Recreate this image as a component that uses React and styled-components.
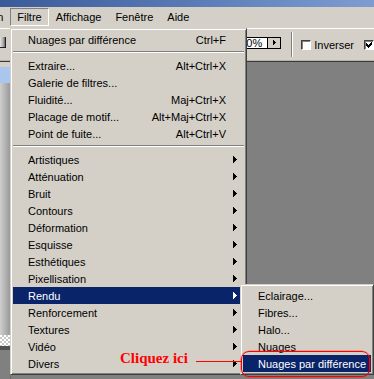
import React from 'react';
import styled, { createGlobalStyle } from 'styled-components';

const Global = createGlobalStyle`
  html, body { margin: 0; padding: 0; background: #808080; }
  body { font-family: "Liberation Sans", Arial, sans-serif; font-size: 11px; color: #000; }
  * { box-sizing: border-box; }
`;

const Screen = styled.div`
  position: relative;
  width: 374px;
  height: 379px;
  overflow: hidden;
  display: flex;
  flex-direction: column;
  background: #d4d0c8;
`;

const TitleBar = styled.div`
  flex: none;
  height: 7px;
  background: linear-gradient(90deg, #3b5a99 0%, #5a7ab6 50%, #7d9dd2 100%);
`;

const MenuBar = styled.div`
  flex: none;
  height: 21px;
  overflow: hidden;
  padding-top: 1px;
  background: #d4d0c8;
`;

const MenuRow = styled.div`
  display: flex;
  margin-left: -49px;
`;

const MenuBarItem = styled.div`
  height: 18px;
  line-height: 16px;
  padding: 0 6px;
  white-space: nowrap;
  border: 1px solid transparent;
  border-color: ${p => (p.$open ? '#808080 #ffffff #ffffff #808080' : 'transparent')};
`;

const OptionsBar = styled.div`
  flex: none;
  height: 33px;
  border-top: 1px solid #ffffff;
  border-bottom: 1px solid #b8b4ac;
  display: flex;
  align-items: center;
`;

const GradButton = styled.div`
  width: 8px;
  height: 11px;
  margin-top: -5px;
  background: linear-gradient(90deg, #e4e4e4 0%, #b0b0b0 60%, #6a6a6a 100%);
  border-right: 1px solid #202020;
  border-bottom: 1px solid #202020;
`;

const ZoomGroup = styled.div`
  display: flex;
  margin-left: 217px;
  margin-top: -4px;
  height: 12px;
  border: 1px solid #000;
`;

const ZoomField = styled.div`
  width: 43px;
  background: #fff;
  text-align: right;
  padding-right: 5px;
  line-height: 10px;
`;

const ZoomArrow = styled.div`
  width: 13px;
  border-left: 1px solid #000;
  background: #d4d0c8;
  display: flex;
  align-items: center;
  justify-content: center;
`;

const VSep = styled.div`
  width: 2px;
  height: 25px;
  margin-left: 10px;
  border-left: 1px solid #808080;
  border-right: 1px solid #ffffff;
`;

const CheckBox = styled.div`
  width: 10px;
  height: 10px;
  margin-left: ${p => p.$ml}px;
  flex: none;
  background: #fff;
  border: 1px solid;
  border-color: #404040 #ffffff #ffffff #404040;
  box-shadow: inset 1px 1px #808080;
  display: flex;
  align-items: center;
  justify-content: center;
`;

const OptLabel = styled.span`
  margin-left: 3px;
  white-space: nowrap;
`;

const Workspace = styled.div`
  flex: 1;
  display: flex;
  border-top: 1px solid #3a3a3a;
  background: #808080;
`;

const ToolsColumn = styled.div`
  width: 11px;
  flex: none;
  display: flex;
  flex-direction: column;
  border-right: 1px solid #6a6a6a;
`;

const ToolsTop = styled.div`
  height: 5px;
  background: #d4d0c8;
`;

const ToolsSelected = styled.div`
  height: 16px;
  background: #a9c6ee;
`;

const ToolsBody = styled.div`
  height: 252px;
  background: linear-gradient(90deg, #cfcfcf 0%, #b4b4b4 50%, #9a9a9a 100%);
`;

const ToolsChecker = styled.div`
  height: 11px;
  background-color: #ffffff;
  background-image:
    linear-gradient(45deg, #c8c8c8 25%, transparent 25%, transparent 75%, #c8c8c8 75%),
    linear-gradient(45deg, #c8c8c8 25%, transparent 25%, transparent 75%, #c8c8c8 75%);
  background-size: 4px 4px;
  background-position: 0 0, 2px 2px;
`;

const ToolsDark = styled.div`
  height: 4px;
  background: #505050;
`;

const Canvas = styled.div`
  flex: 1;
  background: #808080;
`;

/* ---------- popup menus ---------- */

const Popup = styled.div`
  position: absolute;
  left: ${p => p.$x}px;
  top: ${p => p.$y}px;
  width: ${p => p.$w}px;
  background: #d4d0c8;
  border: 1px solid;
  border-color: #d4d0c8 #404040 #404040 #d4d0c8;
  box-shadow: inset 1px 1px #ffffff, inset -1px -1px #808080;
  padding: 2px;
`;

const Item = styled.div`
  display: flex;
  align-items: center;
  height: 17px;
  padding-left: 15px;
  white-space: nowrap;
  background: ${p => (p.$hot ? '#0a246a' : 'transparent')};
  color: ${p => (p.$hot ? '#ffffff' : '#000000')};
`;

const ItemLabel = styled.span`
  flex: 1;
`;

const Shortcut = styled.span``;

const ArrowCell = styled.span`
  width: 18px;
  flex: none;
  display: flex;
  align-items: center;
  padding-left: 7px;
`;

const Separator = styled.div`
  height: 9px;
  padding-top: 3px;
  &::before {
    content: '';
    display: block;
    border-top: 1px solid #808080;
    border-bottom: 1px solid #ffffff;
  }
`;

/* ---------- annotation ---------- */

const CalloutText = styled.div`
  position: absolute;
  left: 120px;
  top: 351px;
  font-family: "Liberation Serif", "Times New Roman", serif;
  font-weight: bold;
  font-size: 15px;
  line-height: 15px;
  color: #ff0000;
  white-space: nowrap;
`;

const CalloutLine = styled.div`
  position: absolute;
  left: 196px;
  top: 361px;
  width: 46px;
  height: 1px;
  background: #ff0000;
`;

const CalloutRing = styled.div`
  position: absolute;
  left: 241px;
  top: 351px;
  width: 129px;
  height: 26px;
  border: 1px solid #ff0000;
  border-radius: 8px;
  box-shadow: 0 0 0 0.6px rgba(255, 0, 0, 0.45);
`;

const SubArrow = ({ color }) => (
  <svg width="4" height="7" viewBox="0 0 4 7" shapeRendering="crispEdges">
    <path d="M0 0h1v7h-1z M1 1h1v5h-1z M2 2h1v3h-1z M3 3h1v1h-1z" fill={color} />
  </svg>
);

const mainItems = [
  { label: 'Nuages par différence', sc: 'Ctrl+F' },
  'sep',
  { label: 'Extraire...', sc: 'Alt+Ctrl+X' },
  { label: 'Galerie de filtres...' },
  { label: 'Fluidité...', sc: 'Maj+Ctrl+X' },
  { label: 'Placage de motif...', sc: 'Alt+Maj+Ctrl+X' },
  { label: 'Point de fuite...', sc: 'Alt+Ctrl+V' },
  'sep',
  { label: 'Artistiques', sub: true },
  { label: 'Atténuation', sub: true },
  { label: 'Bruit', sub: true },
  { label: 'Contours', sub: true },
  { label: 'Déformation', sub: true },
  { label: 'Esquisse', sub: true },
  { label: 'Esthétiques', sub: true },
  { label: 'Pixellisation', sub: true },
  { label: 'Rendu', sub: true, hot: true },
  { label: 'Renforcement', sub: true },
  { label: 'Textures', sub: true },
  { label: 'Vidéo', sub: true },
  { label: 'Divers', sub: true },
];

const subItems = [
  { label: 'Eclairage...' },
  { label: 'Fibres...' },
  { label: 'Halo...' },
  { label: 'Nuages' },
  { label: 'Nuages par différence', hot: true },
];

export default function App() {
  return (
    <>
      <Global />
      <Screen>
        <TitleBar />
        <MenuBar>
          <MenuRow>
            <MenuBarItem>Sélection</MenuBarItem>
            <MenuBarItem $open>Filtre</MenuBarItem>
            <MenuBarItem>Affichage</MenuBarItem>
            <MenuBarItem>Fenêtre</MenuBarItem>
            <MenuBarItem>Aide</MenuBarItem>
          </MenuRow>
        </MenuBar>
        <OptionsBar>
          <GradButton />
          <ZoomGroup>
            <ZoomField>100%</ZoomField>
            <ZoomArrow>
              <svg width="3" height="5" viewBox="0 0 3 5" shapeRendering="crispEdges">
                <path d="M0 0h1v5h-1z M1 1h1v3h-1z M2 2h1v1h-1z" fill="#000" />
              </svg>
            </ZoomArrow>
          </ZoomGroup>
          <VSep />
          <CheckBox $ml={8} />
          <OptLabel>Inverser</OptLabel>
          <CheckBox $ml={10}>
            <svg width="7" height="7" viewBox="0 0 7 7" shapeRendering="crispEdges">
              <path d="M6 0v3l-4 4v-3z M0 2l2 2v3l-2-2z" fill="#000" />
            </svg>
          </CheckBox>
        </OptionsBar>
        <Workspace>
          <ToolsColumn>
            <ToolsTop />
            <ToolsSelected />
            <ToolsBody />
            <ToolsChecker />
            <ToolsDark />
          </ToolsColumn>
          <Canvas />
        </Workspace>

        <Popup $x={10} $y={28} $w={237}>
          {mainItems.map((it, i) =>
            it === 'sep' ? (
              <Separator key={i} />
            ) : (
              <Item key={i} $hot={it.hot}>
                <ItemLabel>{it.label}</ItemLabel>
                {it.sc && <Shortcut>{it.sc}</Shortcut>}
                <ArrowCell>{it.sub && <SubArrow color={it.hot ? '#fff' : '#000'} />}</ArrowCell>
              </Item>
            )
          )}
        </Popup>

        <Popup $x={240} $y={284} $w={134}>
          {subItems.map((it, i) => (
            <Item key={i} $hot={it.hot}>
              <ItemLabel>{it.label}</ItemLabel>
            </Item>
          ))}
        </Popup>

        <CalloutText>Cliquez ici</CalloutText>
        <CalloutLine />
        <CalloutRing />
      </Screen>
    </>
  );
}
